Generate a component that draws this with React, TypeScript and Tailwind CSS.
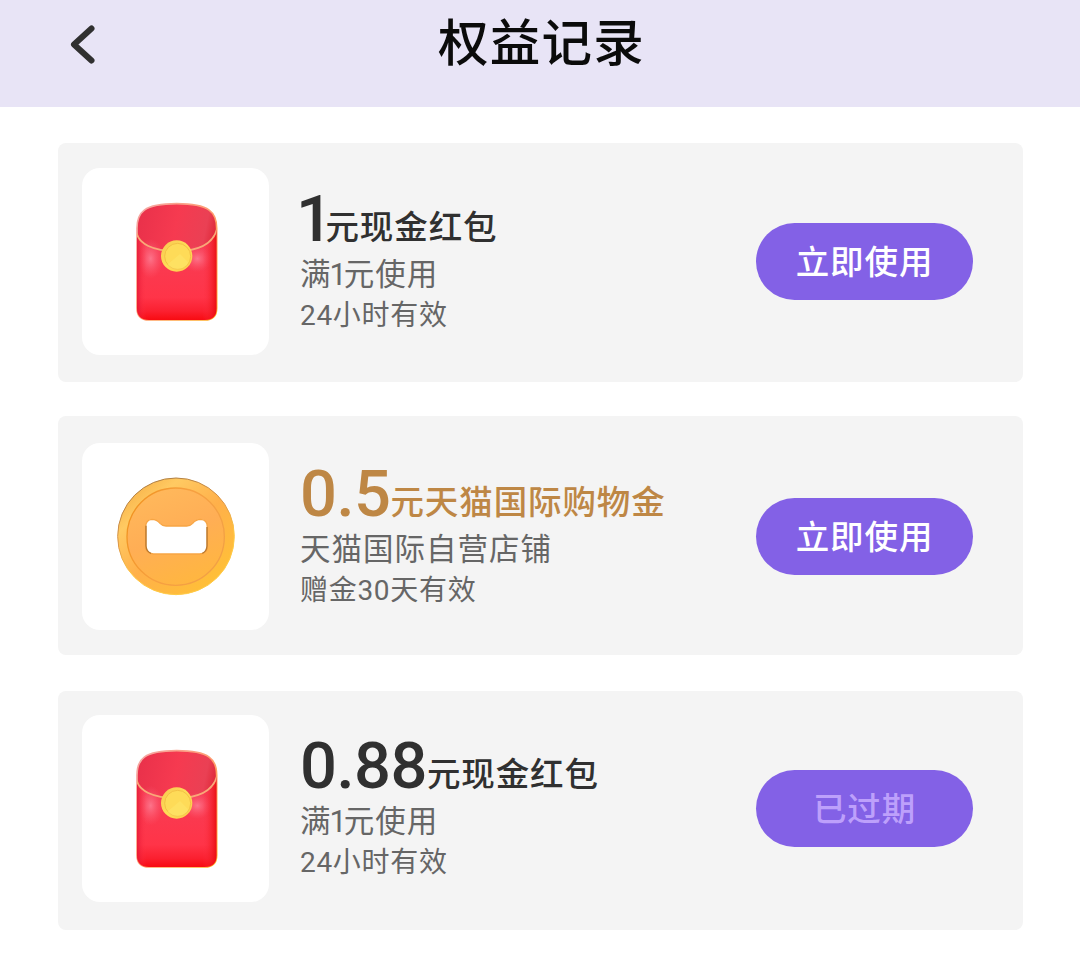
import clsx from 'clsx';

type Benefit = {
  id: number;
  icon: 'packet' | 'coin';
  amount: string;
  title: string;
  rule: string[];
  validity: string;
  expired?: boolean;
  gold?: boolean;
  pad: string;
};

const benefits: Benefit[] = [
  {
    id: 1,
    icon: 'packet',
    amount: '1',
    title: '元现金红包',
    rule: ['满', '1', '元使用'],
    validity: '24小时有效',
    pad: 'pt-[25px]',
  },
  {
    id: 2,
    icon: 'coin',
    amount: '0.5',
    title: '元天猫国际购物金',
    rule: ['天猫国际自营店铺'],
    validity: '赠金30天有效',
    gold: true,
    pad: 'pt-[27px]',
  },
  {
    id: 3,
    icon: 'packet',
    amount: '0.88',
    title: '元现金红包',
    rule: ['满', '1', '元使用'],
    validity: '24小时有效',
    expired: true,
    pad: 'mt-[1.5px] pt-[24px]',
  },
];

function PacketIcon() {
  return (
    <svg viewBox="6 24 561 561" className="size-full">
      <defs>
        <linearGradient id="packetBack" x1="0" y1="0" x2="1" y2="0.3">
          <stop offset="0" stopColor="#e8304a" />
          <stop offset="0.5" stopColor="#f63a50" />
          <stop offset="0.85" stopColor="#ea4054" />
          <stop offset="1" stopColor="#dd2434" />
        </linearGradient>
        <linearGradient id="packetFront" x1="0" y1="0" x2="0" y2="1">
          <stop offset="0" stopColor="#f4405a" />
          <stop offset="0.75" stopColor="#ff3448" />
          <stop offset="0.9" stopColor="#fb2030" />
          <stop offset="1" stopColor="#f80a10" />
        </linearGradient>
        <linearGradient id="packetSide" x1="0" y1="0" x2="1" y2="0">
          <stop offset="0" stopColor="#e01030" stopOpacity="0.7" />
          <stop offset="0.12" stopColor="#ff3448" stopOpacity="0" />
          <stop offset="0.82" stopColor="#ff3448" stopOpacity="0" />
          <stop offset="1" stopColor="#e80808" stopOpacity="0.9" />
        </linearGradient>
        <radialGradient id="packetGlow">
          <stop offset="0" stopColor="#ff9ab0" stopOpacity="0.6" />
          <stop offset="1" stopColor="#ff6a80" stopOpacity="0" />
        </radialGradient>
        <linearGradient id="packetRim" x1="0" y1="0" x2="1" y2="1">
          <stop offset="0" stopColor="#f4a8a8" />
          <stop offset="0.5" stopColor="#ff9c70" />
          <stop offset="1" stopColor="#ffb020" />
        </linearGradient>
        <linearGradient id="packetSeal" x1="0" y1="0" x2="1" y2="1">
          <stop offset="0" stopColor="#f7c850" />
          <stop offset="0.5" stopColor="#ffdc58" />
          <stop offset="1" stopColor="#fbcb48" />
        </linearGradient>
        <clipPath id="packetBody">
          <path d="M171 205C171 158 190 131 290 131S410 158 410 205V444Q410 480 374 480H207Q171 480 171 444Z" />
        </clipPath>
      </defs>
      <path
        d="M171 205C171 158 190 131 290 131S410 158 410 205V444Q410 480 374 480H207Q171 480 171 444Z"
        fill="url(#packetBack)"
        stroke="url(#packetRim)"
        strokeWidth="5"
      />
      <g clipPath="url(#packetBody)">
        <path d="M170 220C178 250 215 273 290 273S400 245 411 208V481H170Z" fill="url(#packetFront)" />
        <ellipse cx="212" cy="296" rx="38" ry="60" fill="url(#packetGlow)" />
        <ellipse cx="352" cy="296" rx="44" ry="40" fill="url(#packetGlow)" />
        <path d="M170 220C178 250 215 273 290 273S400 245 411 208V481H170Z" fill="url(#packetSide)" />
        <path d="M170 220C178 250 215 273 290 273S400 245 411 208" fill="none" stroke="#f9a878" strokeWidth="5" />
      </g>
      <circle cx="290" cy="288" r="47" fill="url(#packetSeal)" />
      <circle cx="293" cy="289" r="39" fill="#fedb58" stroke="#f3c045" strokeWidth="3" />
      <path d="M262 314A38 38 0 0 0 326 308L300 282Z" fill="#fff07a" opacity="0.3" />
    </svg>
  );
}

function CoinIcon() {
  return (
    <svg viewBox="6 24 561 561" className="size-full">
      <defs>
        <linearGradient id="coinRim" x1="0.1" y1="0.1" x2="0.8" y2="0.9">
          <stop offset="0" stopColor="#f8b34a" />
          <stop offset="0.2" stopColor="#ffca62" />
          <stop offset="0.55" stopColor="#ffb04a" />
          <stop offset="1" stopColor="#ffbf38" />
        </linearGradient>
        <linearGradient id="coinFace" x1="0.2" y1="0" x2="0.6" y2="1">
          <stop offset="0" stopColor="#ffb95c" />
          <stop offset="0.5" stopColor="#ffae55" />
          <stop offset="1" stopColor="#ffb640" />
        </linearGradient>
        <linearGradient id="coinEdge" x1="0" y1="0" x2="0.4" y2="1">
          <stop offset="0" stopColor="#9c7440" />
          <stop offset="0.5" stopColor="#dc9648" />
          <stop offset="0.75" stopColor="#ffca45" />
        </linearGradient>
        <linearGradient id="coinGroove" x1="0" y1="0.2" x2="1" y2="0.6">
          <stop offset="0" stopColor="#f0921f" />
          <stop offset="0.5" stopColor="#f7a040" />
          <stop offset="1" stopColor="#f2a045" />
        </linearGradient>
      </defs>
      <circle cx="288" cy="304" r="175" fill="url(#coinRim)" stroke="url(#coinEdge)" strokeWidth="3" />
      <circle cx="287" cy="305" r="146" fill="url(#coinFace)" stroke="url(#coinGroove)" strokeWidth="4" />
      <path
        d="M197 276Q197 254 216 253Q230 253 240 265Q247 273 258 273H320Q331 273 338 265Q348 253 362 253Q382 254 382 276V334Q382 357 359 357H221Q197 357 197 334Z"
        fill="#fff"
        stroke="#f7a544"
        strokeWidth="4"
      />
      <path d="M198 272V333Q199 349 213 355" fill="none" stroke="#b8772e" strokeWidth="4" />
      <path d="M381 276V333Q380 349 367 355" fill="none" stroke="#b8772e" strokeWidth="4" />
    </svg>
  );
}

function BenefitCard({ item }: { item: Benefit }) {
  return (
    <li className={clsx('flex h-[239px] items-start rounded-lg bg-[#f4f4f4] pl-6 pr-[50px]', item.pad)}>
      <div className="size-[187px] shrink-0 rounded-[18px] bg-white">
        {item.icon === 'packet' ? <PacketIcon /> : <CoinIcon />}
      </div>

      <div className="ml-[31px] flex-1 whitespace-nowrap pt-[18px]">
        <h2
          className={clsx(
            'flex h-[67px] items-start font-medium',
            item.gold ? 'text-[#be8745]' : 'text-[#303030]',
          )}
        >
          <span
            className={clsx(
              'text-[65px] leading-[66px] tracking-[-0.5px]',
              item.amount === '1' && '-ml-[4px] -mr-[7px]',
            )}
          >
            {item.amount}
          </span>
          <span className="pt-5 text-[33.5px] leading-[44px] tracking-[0.9px]">{item.title}</span>
        </h2>
        <p className="h-[42px] pt-px text-[30.5px] leading-[42px] tracking-[1px] text-[#666]">
          {item.rule.map((part) => (
            <span key={part} className={clsx(part === '1' && '-ml-0.5 -mr-0.5 tracking-[-1px]')}>
              {part}
            </span>
          ))}
        </p>
        <p className="h-10 pt-px text-[28px] leading-10 tracking-[0.7px] text-[#666]">{item.validity}</p>
      </div>

      <button
        disabled={item.expired}
        className={clsx(
          'mt-[55px] h-[77px] w-[217px] shrink-0 rounded-full bg-[#8361e6] pt-1 text-[33.5px] font-medium tracking-[0.9px]',
          item.expired ? 'text-[#bda0fb]' : 'text-white',
        )}
      >
        {item.expired ? '已过期' : '立即使用'}
      </button>
    </li>
  );
}

export default function App() {
  return (
    <div className='min-h-[959px] bg-white font-["Roboto","Noto_Sans_CJK_SC",sans-serif]'>
      <header className="flex h-[107px] items-start bg-[#e8e4f6]">
        <button aria-label="返回" className="ml-[68px] mt-6 w-[30px]">
          <svg viewBox="0 0 30 42" className="h-[42px] w-[30px]" fill="none">
            <path
              d="M23.5 4.5L6 20.5L23.5 36.5"
              stroke="#303030"
              strokeWidth="6"
              strokeLinecap="round"
              strokeLinejoin="round"
            />
          </svg>
        </button>
        <h1 className="flex-1 pl-0.5 pr-[97px] pt-0.5 text-center text-[50.5px] font-medium leading-[84px] tracking-[1.2px] text-[#0b0b0b]">
          权益记录
        </h1>
      </header>

      <ul className="flex flex-col gap-[34px] pl-[58px] pr-[57px] pt-9">
        {benefits.map((item) => (
          <BenefitCard key={item.id} item={item} />
        ))}
      </ul>
    </div>
  );
}
